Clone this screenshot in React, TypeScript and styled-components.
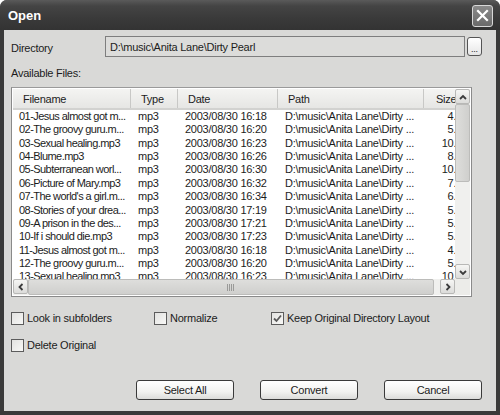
import React from "react";
import styled, { createGlobalStyle } from "styled-components";

const GlobalStyle = createGlobalStyle`
  html, body {
    margin: 0;
    padding: 0;
    background: #ffffff;
  }
  body {
    font-family: "Liberation Sans", Arial, sans-serif;
    font-size: 11px;
    letter-spacing: -0.25px;
    color: #1c1c1c;
  }
`;

type FileRow = {
  name: string;
  time: string;
  size: string;
};

const files: FileRow[] = [
  { name: "01-Jesus almost got m...", time: "16:18", size: "4.68" },
  { name: "02-The groovy guru.m...", time: "16:20", size: "5.74" },
  { name: "03-Sexual healing.mp3", time: "16:23", size: "10.35" },
  { name: "04-Blume.mp3", time: "16:26", size: "8.35" },
  { name: "05-Subterranean worl...", time: "16:30", size: "10.73" },
  { name: "06-Picture of Mary.mp3", time: "16:32", size: "7.73" },
  { name: "07-The world's a girl.m...", time: "16:34", size: "6.05" },
  { name: "08-Stories of your drea...", time: "17:19", size: "5.24" },
  { name: "09-A prison in the des...", time: "17:21", size: "5.23" },
  { name: "10-If i should die.mp3", time: "17:23", size: "5.57" },
  { name: "11-Jesus almost got m...", time: "16:18", size: "4.68" },
  { name: "12-The groovy guru.m...", time: "16:20", size: "5.74" },
  { name: "13-Sexual healing.mp3", time: "16:23", size: "10.35" },
];

const columns = "118px 47px 100px 146px 56px";

export default function App() {
  return (
    <>
      <GlobalStyle />
      <Window>
        <TitleBar>
          <Title>Open</Title>
          <CloseButton aria-label="Close">
            <svg width="13" height="13" viewBox="0 0 13 13">
              <path d="M2 2 L11 11 M11 2 L2 11" stroke="#ffffff" strokeWidth="2.2" strokeLinecap="square" />
            </svg>
          </CloseButton>
        </TitleBar>
        <Body>
          <DirRow>
            <Label>Directory</Label>
            <PathInput>D:\music\Anita Lane\Dirty Pearl</PathInput>
            <BrowseButton>...</BrowseButton>
          </DirRow>
          <SectionLabel>Available Files:</SectionLabel>
          <ListFrame>
            <ListView>
              <ListInner>
                <HeaderRow>
                  <HeaderCell>Filename</HeaderCell>
                  <HeaderCell>Type</HeaderCell>
                  <HeaderCell>Date</HeaderCell>
                  <HeaderCell>Path</HeaderCell>
                  <HeaderCell $pad={12}>Size (MB)</HeaderCell>
                </HeaderRow>
                {files.map((f, i) => (
                  <DataRow key={i}>
                    <NameCell>{f.name}</NameCell>
                    <Cell>mp3</Cell>
                    <Cell>2003/08/30 {f.time}</Cell>
                    <Cell>D:\music\Anita Lane\Dirty ...</Cell>
                    <Cell $right>{f.size}</Cell>
                  </DataRow>
                ))}
              </ListInner>
            </ListView>
            <VScroll>
              <ArrowBtn>
                <Chevron dir="up" />
              </ArrowBtn>
              <VThumb />
              <VTrack />
              <ArrowBtn>
                <Chevron dir="down" />
              </ArrowBtn>
            </VScroll>
            <HScroll>
              <ArrowBtn>
                <Chevron dir="left" />
              </ArrowBtn>
              <HThumb>
                <Grip />
              </HThumb>
              <HTrack />
              <ArrowBtn>
                <Chevron dir="right" />
              </ArrowBtn>
            </HScroll>
            <Corner />
          </ListFrame>
          <Options>
            <Check label="Look in subfolders" />
            <Check label="Normalize" />
            <Check label="Keep Original Directory Layout" checked />
            <Check label="Delete Original" />
          </Options>
          <ButtonRow>
            <PushButton>Select All</PushButton>
            <PushButton>Convert</PushButton>
            <PushButton>Cancel</PushButton>
          </ButtonRow>
        </Body>
      </Window>
    </>
  );
}

function Check({ label, checked }: { label: string; checked?: boolean }) {
  return (
    <CheckItem>
      <CheckBox>
        {checked && (
          <svg width="11" height="11" viewBox="0 0 11 11">
            <path d="M2 5.5 L4.5 8 L9 2.5" fill="none" stroke="#5a5a5a" strokeWidth="1.8" />
          </svg>
        )}
      </CheckBox>
      <span>{label}</span>
    </CheckItem>
  );
}

function Chevron({ dir }: { dir: "up" | "down" | "left" | "right" }) {
  const d = {
    up: "M2 7 L5 4 L8 7",
    down: "M2 4 L5 7 L8 4",
    left: "M6.5 2 L3.5 5 L6.5 8",
    right: "M3.5 2 L6.5 5 L3.5 8",
  }[dir];
  return (
    <svg width="10" height="10" viewBox="0 0 10 10">
      <path d={d} fill="none" stroke="#3c3c3c" strokeWidth="1.8" />
    </svg>
  );
}

const Window = styled.div`
  width: 500px;
  height: 415px;
  box-sizing: border-box;
  display: flex;
  flex-direction: column;
  background: #3a3a3a;
  border-radius: 7px 7px 0 0;
  overflow: hidden;
`;

const TitleBar = styled.div`
  height: 30px;
  flex: none;
  display: flex;
  align-items: center;
  justify-content: space-between;
  padding: 0 7px 0 8px;
  background: linear-gradient(#5a5a5a 0%, #444444 20%, #3a3a3a 60%, #333333 100%);
  box-sizing: border-box;
`;

const Title = styled.div`
  color: #ffffff;
  font-weight: bold;
  font-size: 13px;
  letter-spacing: 0;
  margin-top: 1px;
`;

const CloseButton = styled.div`
  width: 19px;
  height: 20px;
  border: 1px solid #d8d8d8;
  border-radius: 3px;
  background: linear-gradient(#8a8a8a, #6a6a6a);
  display: flex;
  align-items: center;
  justify-content: center;
  margin-top: 1px;
`;

const Body = styled.div`
  flex: 1;
  margin: 0 4px 4px 4px;
  background: #d9d9d7;
  padding: 6px 14px 0 7px;
  display: flex;
  flex-direction: column;
`;

const DirRow = styled.div`
  display: flex;
  align-items: center;
  height: 21px;
`;

const Label = styled.div`
  width: 94px;
  flex: none;
  padding-top: 2px;
`;

const PathInput = styled.div`
  width: 360px;
  height: 21px;
  box-sizing: border-box;
  border: 1px solid #7e7e7e;
  background: #dcdcda;
  padding: 0 4px;
  display: flex;
  align-items: center;
`;

const BrowseButton = styled.div`
  width: 15px;
  height: 19px;
  margin-left: 2px;
  box-sizing: border-box;
  border: 1px solid #555;
  border-radius: 3px;
  background: linear-gradient(#ffffff, #e6e6e6);
  display: flex;
  align-items: flex-end;
  justify-content: center;
  font-size: 9px;
  line-height: 12px;
`;

const SectionLabel = styled.div`
  margin-top: 9px;
  height: 14px;
  line-height: 14px;
`;

const ListFrame = styled.div`
  margin-top: 7px;
  width: 461px;
  height: 210px;
  box-sizing: border-box;
  border: 1px solid #8a8a8a;
  border-top-color: #9a9a9a;
  background: #ffffff;
  padding: 1px;
  display: grid;
  grid-template-columns: 1fr 15px;
  grid-template-rows: 1fr 16px;
`;

const ListView = styled.div`
  overflow: hidden;
`;

const ListInner = styled.div`
  width: 480px;
`;

const HeaderRow = styled.div`
  display: grid;
  grid-template-columns: ${columns};
  height: 19px;
  background: linear-gradient(#f4f4f2, #e6e6e4);
  border-bottom: 2px solid #d2d2d0;
`;

const HeaderCell = styled.div<{ $pad?: number }>`
  padding-left: ${(p) => p.$pad ?? 10}px;
  border-right: 1px solid #c8c8c6;
  display: flex;
  align-items: center;
  white-space: nowrap;
  overflow: hidden;
  padding-top: 1px;
`;

const DataRow = styled.div`
  display: grid;
  grid-template-columns: ${columns};
  height: 13.36px;
  line-height: 13px;
`;

const Cell = styled.div<{ $right?: boolean }>`
  padding: 0 ${(p) => (p.$right ? "12px" : "0")} 0 ${(p) => (p.$right ? "0" : "7px")};
  text-align: ${(p) => (p.$right ? "right" : "left")};
  white-space: nowrap;
  overflow: hidden;
`;

const NameCell = styled.div`
  padding-left: 6px;
  white-space: nowrap;
  letter-spacing: -0.55px;
`;

const VScroll = styled.div`
  display: flex;
  flex-direction: column;
  background: #f0f0ee;
`;

const HScroll = styled.div`
  display: flex;
  background: #f0f0ee;
`;

const ArrowBtn = styled.div`
  width: 15px;
  height: 15px;
  flex: none;
  box-sizing: border-box;
  border: 1px solid #b8b8b6;
  border-radius: 2px;
  background: linear-gradient(#f6f6f4, #dcdcda);
  display: flex;
  align-items: center;
  justify-content: center;
`;

const VThumb = styled.div`
  height: 78px;
  flex: none;
  box-sizing: border-box;
  border: 1px solid #bcbcba;
  border-radius: 2px;
  background: linear-gradient(90deg, #dededc, #cfcfcd);
`;

const VTrack = styled.div`
  flex: 1;
`;

const HThumb = styled.div`
  width: 406px;
  flex: none;
  box-sizing: border-box;
  border: 1px solid #bcbcba;
  border-radius: 2px;
  background: linear-gradient(#dededc, #cfcfcd);
  display: flex;
  align-items: center;
  justify-content: center;
`;

const Grip = styled.div`
  width: 8px;
  height: 7px;
  background: repeating-linear-gradient(90deg, #9a9a98 0 1px, transparent 1px 2px);
`;

const HTrack = styled.div`
  flex: 1;
`;

const Corner = styled.div`
  background: #ecece9;
`;

const Options = styled.div`
  margin-top: 14px;
  display: grid;
  grid-template-columns: 143px 117px 1fr;
  row-gap: 13px;
`;

const CheckItem = styled.div`
  display: flex;
  align-items: center;
  gap: 3px;
  height: 14px;
  white-space: nowrap;
`;

const CheckBox = styled.div`
  width: 13px;
  height: 13px;
  box-sizing: border-box;
  border: 1px solid #5c5c5c;
  background: linear-gradient(135deg, #e2e2e0, #f8f8f6);
  display: flex;
  align-items: center;
  justify-content: center;
  flex: none;
`;

const ButtonRow = styled.div`
  margin-top: 28px;
  display: flex;
  justify-content: flex-end;
  gap: 26px;
`;

const PushButton = styled.div`
  width: 98px;
  height: 20px;
  box-sizing: border-box;
  border: 1px solid #3a3a3a;
  border-radius: 3px;
  background: linear-gradient(#ffffff, #f2f2f0 60%, #dcdcda);
  display: flex;
  align-items: center;
  justify-content: center;
  font-size: 11px;
`;
